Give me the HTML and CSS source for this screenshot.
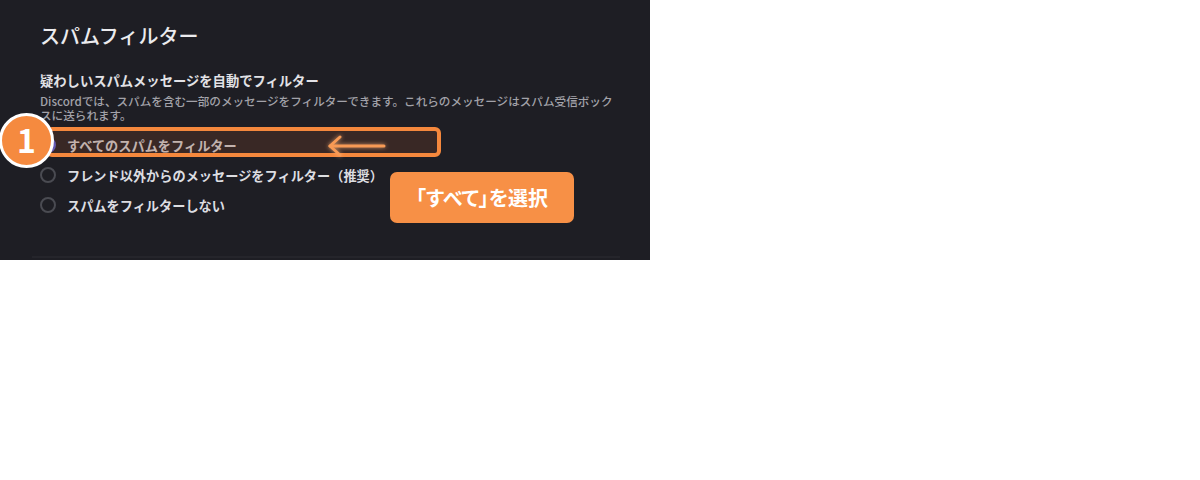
FILE: index.html
```html
<!DOCTYPE html>
<html lang="ja">
<head>
<meta charset="utf-8">
<link rel="stylesheet" href="styles.css">
</head>
<body>
<div class="panel">
  <h1 class="title">スパムフィルター</h1>
  <h2 class="heading">疑わしいスパムメッセージを自動でフィルター</h2>
  <p class="desc">Discordでは、スパムを含む一部のメッセージをフィルターできます。これらのメッセージはスパム受信ボックスに送られます。</p>
  <div class="options">
    <div class="option"><span class="radio selected"></span><span>すべてのスパムをフィルター</span></div>
    <div class="option"><span class="radio"></span><span>フレンド以外からのメッセージをフィルター（推奨）</span></div>
    <div class="option"><span class="radio"></span><span>スパムをフィルターしない</span></div>
  </div>
  <div class="highlight"></div>
  <div class="badge">1</div>
  <svg class="arrow" width="70" height="30" viewBox="0 0 70 30">
    <g fill="none" stroke="#f79a55" stroke-width="3" stroke-linecap="round" stroke-linejoin="round">
      <path d="M8 15 H62"/>
      <path d="M18 6 L8 15 L18 24"/>
    </g>
  </svg>
  <div class="callout">「すべて」を選択</div>
  <div class="bottom-line"></div>
</div>
</body>
</html>
```

FILE: styles.css
```css
html, body {
  margin: 0;
  padding: 0;
  background: #ffffff;
}
body {
  font-family: "Noto Sans CJK JP", "Noto Sans", sans-serif;
  width: 1200px;
  height: 480px;
}
.panel {
  position: relative;
  width: 610px;
  height: 238px;
  padding: 22px 0 0 40px;
  background: #1e1e24;
  overflow: hidden;
}
.title {
  margin: 0;
  font-size: 20px;
  line-height: 28px;
  font-weight: 500;
  color: #ebebee;
}
.heading {
  margin: 22px 0 0;
  font-size: 13.3px;
  line-height: 18px;
  font-weight: 700;
  color: #e2e2e6;
}
.desc {
  margin: 4px 0 0;
  width: 576px;
  font-size: 11.6px;
  line-height: 14px;
  font-weight: 500;
  color: #a2a2a9;
}
.options {
  margin-top: 8px;
  display: flex;
  flex-direction: column;
}
.option {
  height: 30px;
  display: flex;
  align-items: center;
  gap: 11px;
  font-size: 13.2px;
  font-weight: 700;
  color: #dcdde1;
}
.radio {
  box-sizing: border-box;
  width: 16px;
  height: 16px;
  border-radius: 50%;
  border: 2px solid #4a4b52;
}
.radio.selected {
  border-color: #5b63e8;
  background: radial-gradient(circle, #ffffff 0 3px, #5b63e8 3.5px);
}
.highlight {
  position: absolute;
  left: 46px;
  top: 127px;
  width: 387px;
  height: 22px;
  border: 4px solid #f5883d;
  border-radius: 6px;
  background: rgba(130, 70, 40, 0.28);
}
.badge {
  position: absolute;
  left: -1px;
  top: 113px;
  box-sizing: border-box;
  width: 55px;
  height: 55px;
  border-radius: 50%;
  border: 3px solid #ffffff;
  background: #f58a3f;
  color: #ffffff;
  font-size: 32px;
  font-weight: 700;
  line-height: 47px;
  text-align: center;
}
.arrow {
  position: absolute;
  left: 322px;
  top: 131px;
  filter: drop-shadow(0 0 2px rgba(255, 180, 120, 0.8));
}
.callout {
  position: absolute;
  left: 390px;
  top: 172px;
  width: 184px;
  height: 51px;
  border-radius: 7px;
  background: #f79046;
  color: #ffffff;
  font-size: 20px;
  font-weight: 700;
  line-height: 51px;
  text-align: center;
  font-feature-settings: "palt";
}
.bottom-line {
  position: absolute;
  left: 32px;
  right: 30px;
  bottom: 2px;
  height: 2px;
  background: #25252b;
}
```
